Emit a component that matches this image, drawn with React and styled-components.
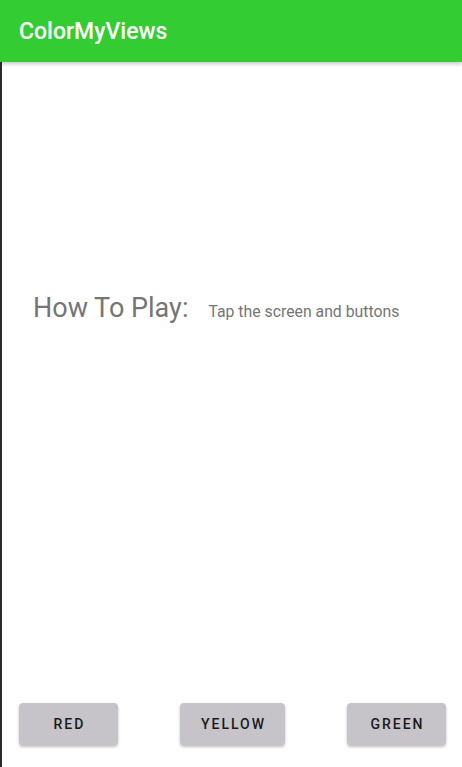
import React from "react";
import styled, { createGlobalStyle } from "styled-components";

const GlobalStyle = createGlobalStyle`
  html, body {
    margin: 0;
    padding: 0;
    background: #ffffff;
    font-family: Roboto, "Noto Sans", sans-serif;
  }
`;

const Screen = styled.div`
  display: flex;
  flex-direction: column;
  width: 462px;
  height: 767px;
  overflow: hidden;
`;

const Toolbar = styled.header`
  height: 62px;
  flex-shrink: 0;
  display: flex;
  align-items: center;
  padding-left: 19px;
  background: #33cc33;
  box-shadow: 0 2px 4px rgba(0, 0, 0, 0.22);
  position: relative;
  z-index: 1;
`;

const Title = styled.h1`
  margin: 0;
  font-size: 23px;
  font-weight: 500;
  color: #ffffff;
`;

const Content = styled.main`
  flex: 1;
  display: flex;
  flex-direction: column;
  border-left: 2px solid #2b2b2b;
`;

const Instructions = styled.div`
  display: flex;
  align-items: baseline;
  gap: 20px;
  margin-top: 230px;
  padding-left: 31px;
  color: #757575;
`;

const Heading = styled.span`
  font-size: 27px;
`;

const Hint = styled.span`
  font-size: 15.8px;
`;

const Spacer = styled.div`
  flex: 1;
`;

const ButtonRow = styled.div`
  display: flex;
  justify-content: space-between;
  padding: 0 16px 22px 17px;
`;

const ColorButton = styled.button`
  height: 42px;
  width: ${(p) => p.$width}px;
  padding: 0 0 0 2px;
  border: none;
  border-radius: 4px;
  background: #c6c4c9;
  box-shadow: 0 2px 3px rgba(0, 0, 0, 0.25);
  font-family: Roboto, sans-serif;
  font-size: 14px;
  font-weight: 500;
  letter-spacing: 2px;
  color: #1a1a1a;
  cursor: pointer;
`;

export default function App() {
  return (
    <>
      <GlobalStyle />
      <Screen>
        <Toolbar>
          <Title>ColorMyViews</Title>
        </Toolbar>
        <Content>
          <Instructions>
            <Heading>How To Play:</Heading>
            <Hint>Tap the screen and buttons</Hint>
          </Instructions>
          <Spacer />
          <ButtonRow>
            <ColorButton $width={99}>RED</ColorButton>
            <ColorButton $width={105}>YELLOW</ColorButton>
            <ColorButton $width={99}>GREEN</ColorButton>
          </ButtonRow>
        </Content>
      </Screen>
    </>
  );
}
